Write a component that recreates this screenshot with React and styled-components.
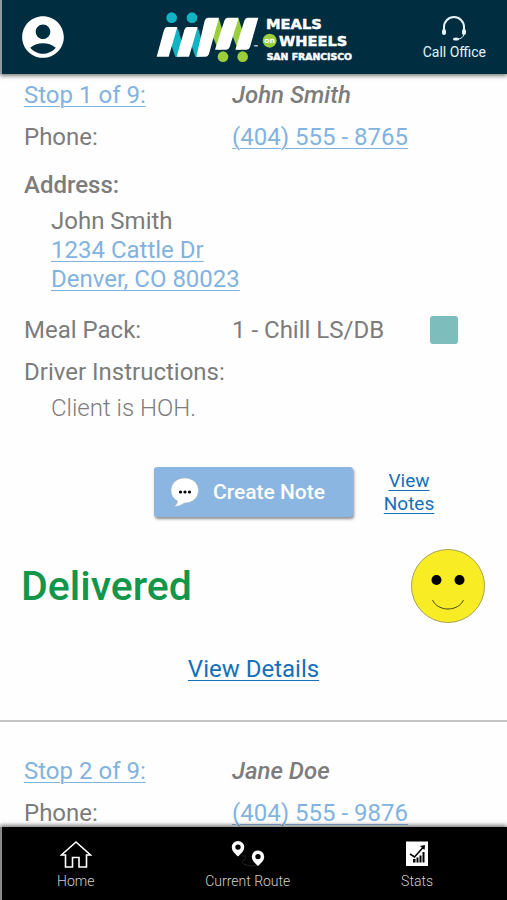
import React from 'react';
import styled, { createGlobalStyle } from 'styled-components';
import { MdAccountCircle } from 'react-icons/md';

const GlobalStyle = createGlobalStyle`
  :root {
    --color-navy: #002d40;
    --color-text: #7c7c7c;
    --color-link: #82b3df;
    --color-link-strong: #1470b8;
    --color-green: #12964a;
  }

  * {
    box-sizing: border-box;
  }

  body {
    margin: 0;
    background: #fefefe;
    color: var(--color-text);
    font-family: Roboto, sans-serif;
    font-size: 24px;
    line-height: 28px;
  }
`;

const Page = styled.div`
  display: flex;
  flex-direction: column;
  height: 100vh;
`;

const Header = styled.header`
  display: grid;
  grid-template-columns: 1fr auto 1fr;
  align-items: center;
  flex: none;
  height: 74px;
  padding: 0 21px 0 16px;
  background: var(--color-navy);
  border-left: 2px solid #8b9ca3;
  box-shadow: 0 2px 4px rgba(0, 0, 0, 0.5);
  z-index: 1;
`;

const ProfileButton = styled.button`
  display: flex;
  justify-self: start;
  padding: 0;
  border: 0;
  background: none;
  color: white;
  font-size: 50px;
  cursor: pointer;
`;

const CallLink = styled.a`
  display: flex;
  flex-direction: column;
  align-items: center;
  justify-self: end;
  padding-top: 4px;
  color: #e6f3fa;
  font-size: 14px;
  line-height: 20px;
  text-decoration: none;
`;

const Stops = styled.main`
  flex: 1;
  min-height: 0;
  overflow-y: auto;
  scrollbar-width: none;
`;

const StopCard = styled.article`
  display: flex;
  flex-direction: column;
  padding-top: ${props => (props.$first ? '7px' : '35px')};
  padding-bottom: 37px;
  border-bottom: 2px solid #c4c4c4;
`;

const Details = styled.div`
  display: flex;
  flex-direction: column;
  gap: 14px;
  padding: 0 24px;
`;

const Row = styled.div`
  display: grid;
  grid-template-columns: 208px 1fr auto;
  align-items: center;
`;

const TextLink = styled.a`
  justify-self: start;
  color: var(--color-link);
  text-decoration-thickness: 1px;
  text-underline-offset: 3px;
`;

const StrongLink = styled(TextLink)`
  color: var(--color-link-strong);
`;

const ClientName = styled.em`
  font-weight: 500;
`;

const Section = styled.section`
  display: flex;
  flex-direction: column;
  gap: 8px;
  padding: ${props => (props.$spaced ? '6px 0 8px' : '0')};
`;

const SectionTitle = styled.div`
  font-weight: ${props => (props.$bold ? 500 : 400)};
`;

const Address = styled.address`
  display: flex;
  flex-direction: column;
  align-items: flex-start;
  padding-left: 27px;
  font-style: normal;
  line-height: 29px;
`;

const Instructions = styled.div`
  padding-left: 27px;
  font-weight: 300;
`;

const Swatch = styled.span`
  width: 28px;
  height: 28px;
  margin-right: 25px;
  border-radius: 3px;
  background: #7dbdbb;
`;

const Actions = styled.div`
  display: grid;
  grid-template-columns: 1fr auto 1fr;
  align-items: center;
  margin-top: 45px;
`;

const NoteButton = styled.button`
  display: flex;
  grid-column: 2;
  align-items: center;
  gap: 14px;
  height: 50px;
  padding: 0 28px 0 16px;
  border: 0;
  border-radius: 3px;
  background: #8ab6e1;
  box-shadow: 1px 2px 3px rgba(0, 0, 0, 0.45);
  color: white;
  font: 500 21px Roboto, sans-serif;
  cursor: pointer;
`;

const NotesLink = styled(StrongLink)`
  width: 56px;
  margin-left: 28px;
  font-size: 19px;
  line-height: 23px;
  text-align: center;
`;

const StatusRow = styled.div`
  display: flex;
  align-items: center;
  justify-content: space-between;
  margin: 32px 22px 32px 21px;
`;

const Status = styled.h2`
  margin: 0;
  color: var(--color-green);
  font-size: 41px;
  font-weight: 500;
  line-height: 48px;
`;

const DetailsLink = styled(StrongLink)`
  align-self: center;
`;

const TabBar = styled.nav`
  display: flex;
  align-items: flex-end;
  justify-content: space-between;
  flex: none;
  height: 73px;
  padding: 0 74px 9px 55px;
  background: black;
  border-left: 2px solid #8a8a8a;
  box-shadow: 0 -2px 4px rgba(0, 0, 0, 0.5);
  z-index: 1;
`;

const Tab = styled.a`
  display: flex;
  flex-direction: column;
  align-items: center;
  gap: 3px;
  color: #d0d0d0;
  font-size: 14px;
  font-weight: 300;
  line-height: 20px;
  text-decoration: none;
`;

const Logo = () => (
  <svg width="204" height="56" viewBox="0 28 612 168" role="img" aria-label="Meals on Wheels San Francisco">
    <g fill="#12b4c4">
      <circle cx="65" cy="54" r="16" />
      <circle cx="126" cy="54" r="16" />
      <path d="M76 82L84 88L101 146L94 171L76 171L62 130Z" />
      <path d="M136 82L145 88L162 146L155 171L136 171L122 130Z" />
    </g>
    <g fill="#9bce3b">
      <circle cx="219" cy="171" r="16" />
      <circle cx="278" cy="171" r="16" />
      <path d="M198 54L207 58L226 120L212 150L205 150L184 100Z" />
      <path d="M258 54L266 58L286 120L272 150L264 150L244 100Z" />
    </g>
    <g fill="white">
      <path d="M51 82H82L56 171H20L42 91Q45 82 51 82Z" />
      <path d="M112 82H143L117 171H80L103 91Q106 82 112 82Z" />
      <path d="M174 54H207L177 162Q174 171 166 171H139L164 63Q167 54 174 54Z" />
      <path d="M233 54H266L239 142Q236 150 229 150H195L223 63Q226 54 233 54Z" />
      <path d="M293 54H325L300 142Q297 150 290 150H256L283 63Q286 54 293 54Z" />
    </g>
    <circle cx="359" cy="123" r="21" fill="#9bce3b" />
    <g fill="white" fontFamily="DejaVu Sans, sans-serif" fontWeight="700">
      <text x="310" y="147" fontSize="16">™</text>
      <text x="343" y="130" fontSize="23">on</text>
      <g stroke="white" strokeWidth="1.500">
        <text x="348" y="88" fontSize="44">MEALS</text>
        <text x="387" y="138" fontSize="44">WHEELS</text>
        <text x="350" y="181" fontSize="28">SAN FRANCISCO</text>
      </g>
    </g>
  </svg>
);

const HeadsetIcon = () => (
  <svg width="26" height="26" viewBox="0 0 26 26" fill="none" stroke="#e6f3fa" aria-hidden="true">
    <path d="M3 14V11A10 10 0 0 1 23 11V14" strokeWidth="2" />
    <path d="M23 18Q22 23 16 23" strokeWidth="1" />
    <rect x="1" y="13" width="4" height="6" rx="2" fill="#e6f3fa" stroke="none" />
    <rect x="21" y="13" width="4" height="6" rx="2" fill="#e6f3fa" stroke="none" />
    <ellipse cx="15" cy="23" rx="3" ry="1.6" fill="#e6f3fa" stroke="none" />
  </svg>
);

const SpeechIcon = () => (
  <svg width="29" height="31" viewBox="0 0 29 31" aria-hidden="true">
    <path
      d="M14.500 1C22.500 1 28.500 6 28.500 13.500S22.500 26 14.500 26Q10 29.500 4 29.500Q7.500 27 7.500 24Q1 20.500 1 13.500C1 6 7 1 14.500 1Z"
      fill="white"
      stroke="#9eacb9"
      strokeWidth="0.5"
    />
    <g fill="black">
      <circle cx="10.500" cy="15" r="1.600" />
      <circle cx="15" cy="15" r="1.600" />
      <circle cx="19.500" cy="15" r="1.600" />
    </g>
  </svg>
);

const Smiley = () => (
  <svg width="74" height="74" viewBox="0 0 74 74" role="img" aria-label="Happy face">
    <circle cx="37" cy="37" r="36.500" fill="#f8ed25" stroke="#a8a253" />
    <circle cx="25.500" cy="31" r="5" />
    <circle cx="48.500" cy="31" r="5" />
    <path d="M21.500 51C27 63 47 63 52.500 51" fill="none" stroke="#4b4710" />
  </svg>
);

const HomeIcon = () => (
  <svg width="32" height="28" viewBox="0 0 32 28" fill="none" stroke="white" strokeWidth="1.600" aria-hidden="true">
    <path d="M16 2L1.500 15H5.500V27H12.500V17.500H19V27H26.500V15H30.500Z" />
  </svg>
);

const RouteIcon = () => (
  <svg width="34" height="28" viewBox="0 0 34 28" aria-hidden="true">
    <path d="M11 16Q16 15 14 19Q8 23 15 25Q22 27 27 25" fill="none" stroke="#242424" />
    <g fill="white" fillRule="evenodd">
      <path d="M7 1A6.200 6.200 0 0 1 13.200 7.200C13.200 11 10 13.500 7 16.500C4 13.500 0.800 11 0.800 7.200A6.200 6.200 0 0 1 7 1ZM7 4.400A2.700 2.700 0 1 0 7 9.800A2.700 2.700 0 1 0 7 4.400Z" />
      <path d="M27 10.500A6.200 6.200 0 0 1 33.200 16.700C33.200 20.500 30 23 27 26C24 23 20.800 20.500 20.800 16.700A6.200 6.200 0 0 1 27 10.500ZM27 13.900A2.700 2.700 0 1 0 27 19.300A2.700 2.700 0 1 0 27 13.900Z" />
    </g>
  </svg>
);

const StatsIcon = () => (
  <svg width="24" height="28" viewBox="0 0 24 28" aria-hidden="true">
    <path d="M1 1.500H23V26H1Z" fill="white" />
    <path d="M5 14L9.500 17L18 7.500" fill="none" stroke="black" strokeWidth="1.600" />
    <path d="M15 6L20 5L19.500 10Z" />
    <path d="M8 19H10.500V22.500H8ZM11.500 17.500H13.500V22.500H11.500ZM14.500 15.500H16.500V22.500H14.500ZM17.500 12H19.500V22.500H17.500Z" />
  </svg>
);

const stops = [
  { number: 1, name: 'John Smith', phone: '(404) 555 - 8765' },
  { number: 2, name: 'Jane Doe', phone: '(404) 555 - 9876' },
];

const StopHeading = ({ stop }) => (
  <>
    <Row>
      <TextLink href={`#stop-${stop.number}`}>Stop {stop.number} of 9:</TextLink>
      <ClientName>{stop.name}</ClientName>
    </Row>
    <Row>
      <span>Phone:</span>
      <TextLink href={`tel:${stop.phone.replace(/\D/g, '')}`}>{stop.phone}</TextLink>
    </Row>
  </>
);

const App = () => (
  <Page>
    <GlobalStyle />
    <Header>
      <ProfileButton aria-label="Profile"><MdAccountCircle /></ProfileButton>
      <Logo />
      <CallLink href="#call-office">
        <HeadsetIcon />
        Call Office
      </CallLink>
    </Header>
    <Stops>
      <StopCard $first>
        <Details>
          <StopHeading stop={stops[0]} />
          <Section $spaced>
            <SectionTitle $bold>Address:</SectionTitle>
            <Address>
              <span>John Smith</span>
              <TextLink href="#map">1234 Cattle Dr</TextLink>
              <TextLink href="#map">Denver, CO 80023</TextLink>
            </Address>
          </Section>
          <Row>
            <span>Meal Pack:</span>
            <span>1 - Chill LS/DB</span>
            <Swatch />
          </Row>
          <Section>
            <SectionTitle>Driver Instructions:</SectionTitle>
            <Instructions>Client is HOH.</Instructions>
          </Section>
        </Details>
        <Actions>
          <NoteButton>
            <SpeechIcon />
            Create Note
          </NoteButton>
          <NotesLink href="#notes">View Notes</NotesLink>
        </Actions>
        <StatusRow>
          <Status>Delivered</Status>
          <Smiley />
        </StatusRow>
        <DetailsLink href="#details">View Details</DetailsLink>
      </StopCard>
      <StopCard>
        <Details>
          <StopHeading stop={stops[1]} />
        </Details>
      </StopCard>
    </Stops>
    <TabBar>
      <Tab href="#home">
        <HomeIcon />
        Home
      </Tab>
      <Tab href="#route">
        <RouteIcon />
        Current Route
      </Tab>
      <Tab href="#stats">
        <StatsIcon />
        Stats
      </Tab>
    </TabBar>
  </Page>
);

export default App;
